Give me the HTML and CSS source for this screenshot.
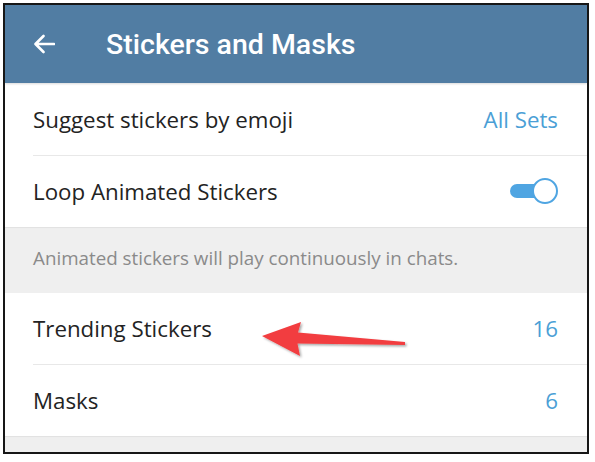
FILE: index.html
```html
<!DOCTYPE html>
<html>
<head>
<meta charset="utf-8">
<link rel="stylesheet" href="styles.css">
</head>
<body>
<div class="frame">
  <header class="appbar">
    <svg class="back" width="22" height="20" viewBox="0 0 22 20"><path d="M21 10H3M10.5 2L2.5 10l8 8" fill="none" stroke="#fff" stroke-width="2.6" stroke-linecap="round" stroke-linejoin="round"/></svg>
    <h1 class="title">Stickers and Masks</h1>
  </header>
  <section class="group">
    <div class="row"><div class="row-inner"><span class="label">Suggest stickers by emoji</span><span class="value">All Sets</span></div></div>
    <div class="row"><div class="row-inner last"><span class="label">Loop Animated Stickers</span><span class="toggle"><span class="thumb"></span></span></div></div>
  </section>
  <div class="info">Animated stickers will play continuously in chats.</div>
  <section class="group">
    <div class="row"><div class="row-inner"><span class="label">Trending Stickers</span><span class="value">16</span></div></div>
    <div class="row"><div class="row-inner last"><span class="label">Masks</span><span class="value">6</span></div></div>
  </section>
  <div class="footer"></div>
  <svg class="annot" width="160" height="50" viewBox="0 0 160 50">
    <defs><filter id="sh" x="-10%" y="-30%" width="130%" height="160%"><feDropShadow dx="1.5" dy="1.5" stdDeviation="1.2" flood-color="#000" flood-opacity="0.35"/></filter></defs>
    <path d="M2 17 L41 3 L38 13.5 L145 23 L145 26 L37.5 24.5 L40 37 Z" fill="#f23d3f" filter="url(#sh)"/>
  </svg>
</div>
</body>
</html>
```
FILE: styles.css
```css
* { box-sizing: border-box; }
html, body { margin: 0; padding: 0; background: #fff; }
body { width: 595px; height: 462px; overflow: hidden; }
.frame {
  position: relative;
  margin: 3px 0 0 3px;
  width: 586px;
  height: 451px;
  border: 2px solid #161616;
  background: #efefef;
  overflow: hidden;
  display: flex;
  flex-direction: column;
}
.appbar {
  height: 78px;
  background: #517da3;
  display: flex;
  align-items: center;
  padding-left: 28px;
  box-shadow: 0 1px 2px rgba(0,0,0,0.15);
  position: relative;
  z-index: 1;
  flex: none;
}
.back { margin-top: -1px; }
.title {
  margin: 0 0 0 51px;
  font-family: Roboto, "Liberation Sans", sans-serif;
  font-weight: 500;
  font-size: 28.5px;
  color: #fff;
  letter-spacing: 0;
}
.group { background: #fff; flex: none; }
.row { padding-left: 28px; }
.row-inner {
  height: 72px;
  display: flex;
  align-items: center;
  justify-content: space-between;
  padding-right: 29px;
  border-bottom: 1px solid #e8e8e8;
}
.row-inner.last { border-bottom: none; height: 71px; }
.group:first-of-type .row:first-child .row-inner { height: 73px; }
.label {
  font-family: "Open Sans", "Liberation Sans", sans-serif;
  font-size: 22.3px;
  color: #232323;
}
.value {
  font-family: "Open Sans", "Liberation Sans", sans-serif;
  font-size: 22.3px;
  color: #4b9fd6;
}
.toggle {
  position: relative;
  width: 47px;
  height: 14px;
  border-radius: 7px;
  background: #4fa5e2;
  margin-top: -2px;
  margin-right: 1px;
}
.thumb {
  position: absolute;
  right: -1px;
  top: -6px;
  width: 26px;
  height: 26px;
  border-radius: 50%;
  background: #fff;
  border: 2.5px solid #4fa5e2;
}
.info {
  height: 66px;
  padding: 0 0 4px 28px;
  display: flex;
  align-items: center;
  font-family: "Open Sans", "Liberation Sans", sans-serif;
  font-size: 18.8px;
  color: #8a8a8a;
  flex: none;
  box-shadow: inset 0 1px 1px rgba(0,0,0,0.06);
}
.footer { flex: 1; box-shadow: inset 0 1px 1px rgba(0,0,0,0.06); }
.annot { position: absolute; left: 255px; top: 314px; }
```
